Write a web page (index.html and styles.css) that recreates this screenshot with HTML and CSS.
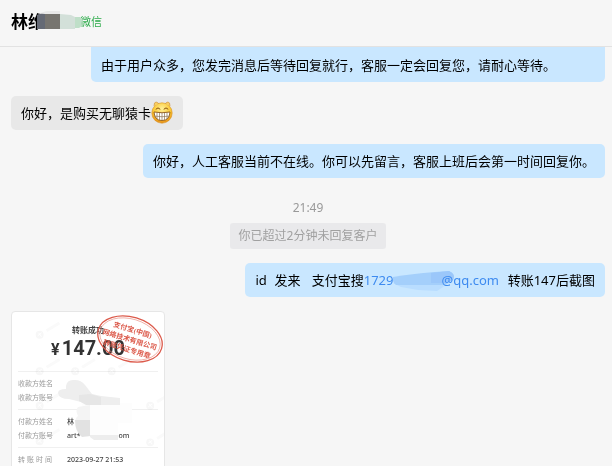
FILE: index.html
```html
<!DOCTYPE html>
<html lang="zh-CN">
<head>
<meta charset="utf-8">
<meta name="viewport" content="width=device-width, initial-scale=1">
<title>微信</title>
<link rel="stylesheet" href="styles.css">
</head>
<body>
<header class="chat-header">
  <h1 class="contact">林维
    <svg class="contact-mask" viewBox="0 0 48 20" aria-hidden="true">
      <path fill="#e9e9e9" d="M3 2L10 0H23V6H3z"/>
      <path fill="#656a75" d="M0 4Q3 2 8 3V18H0z"/>
      <path fill="#777570" d="M8 3H23V18H8z"/>
      <path fill="#d3e0d9" d="M23 3L34 4L38 6V18H23z"/>
      <path fill="#bfdfc8" d="M38 6L43 6L46 9L44 12L45 15L42 17H38z"/>
    </svg>
  </h1>
  <span class="source">微信</span>
</header>
<main class="messages">
  <p class="bubble sent clipped">由于用户众多，您发完消息后等待回复就行，客服一定会回复您，请耐心等待。</p>
  <p class="bubble received">你好，是购买无聊猿卡<svg class="emoji" viewBox="0 0 22 24" role="img" aria-label="呲牙">
      <defs>
        <radialGradient id="face" cx="50%" cy="30%" r="70%"><stop offset="0" stop-color="#fff09a"/><stop offset=".6" stop-color="#fbc832"/><stop offset="1" stop-color="#e58c16"/></radialGradient>
      </defs>
      <circle cx="11" cy="13" r="10.2" fill="url(#face)" stroke="#d99529" stroke-width=".6"/>
      <path fill="#f8cf62" stroke="#c98a3c" stroke-width=".6" d="M3 6Q3 2 5 2Q7 2 7.500 4M14.500 4Q15 2 17 2Q19 2 19 6"/>
      <path fill="none" stroke="#88500d" stroke-width="1" stroke-linecap="round" d="M5 9Q7 6.500 9 9M13 9Q15 6.500 17 9"/>
      <path fill="#fff" stroke="#8a5619" stroke-width=".9" d="M3 12Q11 13.500 19 12Q18.500 20.500 11 20.500Q3.500 20.500 3 12z"/>
      <path fill="none" stroke="#8d7453" stroke-width=".7" d="M3.500 16Q11 17.500 18.500 16M6 12.500V19M8.500 13V20M11 13V20M13.500 13V20M16 12.500V19"/>
    </svg></p>
  <p class="bubble sent">你好，人工客服当前不在线。你可以先留言，客服上班后会第一时间回复你。</p>
  <time class="time">21:49</time>
  <p class="notice">你已超过2分钟未回复客户</p>
  <p class="bubble sent spaced"><span class="chunk">id  </span><span class="chunk">发来   </span>支付宝搜<a class="mail" href="#">1729<svg class="mail-mask" viewBox="0 0 64 22" aria-hidden="true">
      <path fill="#b9ddff" d="M0 12H56L44 20L25 19L8 16z"/>
      <path fill="#a4cffb" d="M0 6Q18 3 42 1L56 0Q63 3 60 9L52 14H3Q-1 11 0 6z"/>
      <path fill="#9bc7fa" d="M38 2L56 0Q63 3 60 9L53 12H38z"/>
    </svg>@qq.com</a>  转账147后截图</p>
  <section class="receipt">
    <h2 class="receipt-title">转账成功</h2>
    <p class="amount"><span class="currency">¥</span>147.00</p>
    <dl class="details">
      <dt>收款方姓名</dt><dd></dd>
      <dt>收款方账号</dt><dd></dd>
    </dl>
    <dl class="details">
      <dt>付款方姓名</dt><dd>林</dd>
      <dt>付款方账号</dt><dd class="account"><span>art*</span><span>om</span></dd>
    </dl>
    <dl class="details">
      <dt>转账时间</dt><dd>2023-09-27 21:53</dd>
    </dl>
    <svg class="watermarks" viewBox="0 0 154 160" aria-hidden="true">
      <defs><g id="mark"><circle r="4"/><path d="M-2 1L2-2M-1-2L2 2" stroke="#fff"/><path stroke="#fafafa" stroke-width="3" d="M7-4L20-12"/></g></defs>
      <g fill="#f7f7f7"><use href="#mark" x="28" y="22"/><use href="#mark" x="28" y="59"/><use href="#mark" x="64" y="59"/><use href="#mark" x="101" y="59"/><use href="#mark" x="28" y="94"/><use href="#mark" x="140" y="94"/><use href="#mark" x="28" y="130"/><use href="#mark" x="140" y="131"/></g>
    </svg>
    <svg class="receipt-mask" viewBox="0 0 76 64" aria-hidden="true">
      <path fill="#fdfdfd" d="M24 24H74V44H60V58H24z"/>
      <path fill="#eee" d="M8 7Q9 0 17 1Q23 1 27 6L34 15L43 17L62 19V26H31L23 23L11 20Q1 20 0 14Q0 10 8 10z"/>
      <path fill="#e6e6e6" d="M21 16L32 15L43 18V26H28L21 22z"/>
      <path fill="#f4f4f4" d="M20 28L32 26V42H17Q18 38 20 37Q17 31 20 28z"/>
      <path fill="#e2e2e2" d="M17 41H32V57L24 58Q17 53 17 41z"/>
      <path fill="#ededed" d="M32 56H60V61H36L32 58z"/>
    </svg>
    <svg class="stamp" viewBox="0 0 68 52" role="img">
      <g transform="translate(34 26) rotate(17)">
        <ellipse rx="33" ry="22" fill="none" stroke="#dc5a4b" stroke-width="1.300"/>
        <ellipse rx="31" ry="20" fill="none" stroke="#e68a7e" stroke-width=".6"/>
        <g class="stamp-text">
          <text y="-7">支付宝(中国)</text>
          <text y="3">网络技术有限公司</text>
          <text y="13">转账凭证专用章</text>
        </g>
      </g>
    </svg>
  </section>
</main>
</body>
</html>
```
FILE: styles.css
```css
* {
  box-sizing: border-box;
}

body {
  display: flex;
  flex-direction: column;
  height: 100vh;
  margin: 0;
  overflow: hidden;
  background: #f6f6f6;
  color: #000;
  font: 13px/20px "Noto Sans", "Noto Sans CJK SC", sans-serif;
}

h1, h2, p, dl, dd {
  margin: 0;
}

.chat-header {
  display: flex;
  flex: none;
  align-items: center;
  gap: 35px;
  height: 47px;
  padding: 0 11px 2px;
  border-bottom: 1px solid #e2e2e2;
}

.contact {
  position: relative;
  color: #000;
  font-size: 17px;
  line-height: 24px;
}

.contact-mask {
  position: absolute;
  top: 1px;
  left: 26px;
  width: 48px;
  height: 20px;
}

.source {
  color: #2cab4a;
  font-size: 11px;
}

.messages {
  display: flex;
  flex: 1;
  flex-direction: column;
  align-items: flex-start;
  gap: 14px;
  min-height: 0;
  padding: 0 7px 0 11px;
  overflow: hidden;
}

.messages > * {
  flex: none;
}

.bubble {
  padding: 7px 10px;
  border-radius: 5px;
}

.sent {
  align-self: flex-end;
  background: #c9e7ff;
}

.received {
  display: flex;
  background: #e8e8e8;
}

.clipped {
  padding: 8px 49px 7px 10px;
  border-radius: 0 0 5px 5px;
}

.spaced {
  white-space: pre;
}

.chunk {
  margin-right: 1px;
}

.emoji {
  width: 22px;
  height: 24px;
  margin: -3px 0;
}

.time {
  align-self: center;
  margin-top: 6px;
  color: #999;
  font-size: 12px;
  line-height: 20px;
}

.notice {
  align-self: center;
  margin-top: -9px;
  padding: 3px 9px;
  border-radius: 3px;
  background: #e9e9eb;
  color: #a0a0a0;
  font-size: 12px;
}

.mail {
  margin-right: 2px;
  color: #3e8bf0;
  text-decoration: none;
}

.mail-mask {
  width: 64px;
  height: 22px;
  margin: -4px -15px -4px -1px;
  vertical-align: middle;
}

.receipt {
  position: relative;
  width: 154px;
  padding: 12px 6px;
  border: 1px solid #e6e6e6;
  border-radius: 4px;
  background: #fff;
  color: #444;
}

.receipt-title {
  font-size: 8px;
  font-weight: 700;
  line-height: 12px;
  text-align: center;
}

.amount {
  margin-bottom: 9px;
  color: #333;
  font: 700 20px/24px Roboto, sans-serif;
  text-align: center;
}

.currency {
  margin-right: 2px;
  font-size: 16px;
}

.details {
  display: grid;
  grid-template-columns: 34px 1fr;
  column-gap: 15px;
  padding: 5px 0 4px;
  border-top: 1px solid #f0f0f0;
  font-size: 7px;
  line-height: 14px;
}

.details dt {
  color: #999;
  text-align-last: justify;
  white-space: nowrap;
}

.details dd {
  font-weight: 500;
}

.account {
  display: flex;
  gap: 38px;
}

.watermarks {
  position: absolute;
  top: 0;
  left: 0;
  width: 100%;
  height: 160px;
  mix-blend-mode: multiply;
}

.receipt-mask {
  position: absolute;
  top: 67px;
  left: 46px;
  width: 76px;
  height: 64px;
}

.stamp {
  position: absolute;
  top: 1px;
  right: 0;
  width: 68px;
  height: 52px;
}

.stamp-text {
  fill: #dc5a4b;
  font: 700 7px "Liberation Serif", "Noto Sans CJK SC", serif;
  text-anchor: middle;
}
```
